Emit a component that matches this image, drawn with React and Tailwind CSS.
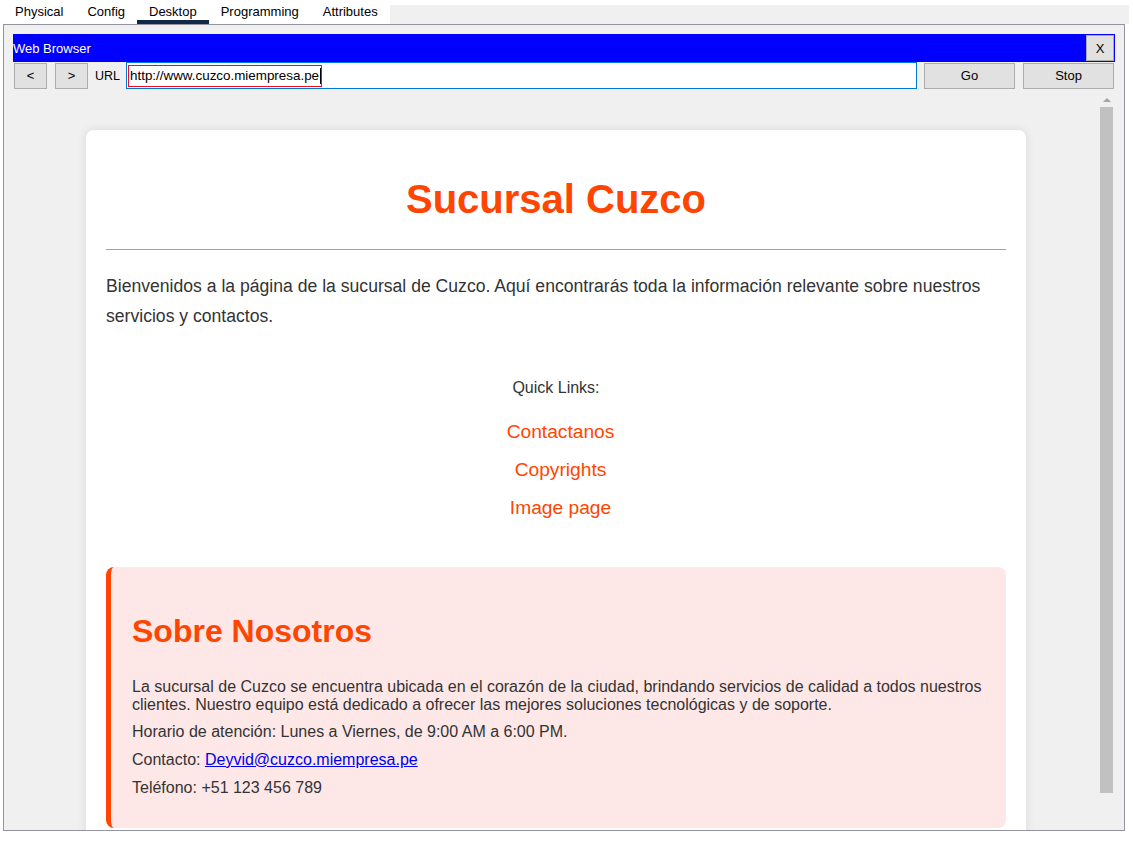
import React from "react";

const TABS = [
  { label: "Physical" },
  { label: "Config" },
  { label: "Desktop", active: true },
  { label: "Programming" },
  { label: "Attributes" },
];

const LINKS = ["Contactanos", "Copyrights", "Image page"];

const WinButton = ({ children, className = "" }) => (
  <div
    className={`flex shrink-0 items-center justify-center pt-px bg-[#e1e1e1] border border-[#adadad] text-[13px] text-black ${className}`}
  >
    {children}
  </div>
);

const App = () => {
  return (
    <div className="w-[1133px] h-[845px] bg-white overflow-hidden font-['Liberation_Sans',Arial,sans-serif] text-black">
      {/* Tab strip */}
      <div className="flex h-6 pl-[3px]">
        {TABS.map((t) => (
          <div
            key={t.label}
            className={`px-3 h-6 flex items-center text-[13px] leading-none border-b-[4px] ${
              t.active ? "border-[#10294a]" : "border-transparent"
            }`}
          >
            <span className="mt-[2px]">{t.label}</span>
          </div>
        ))}
        <div className="flex-1 mt-[5px] mr-[4px] bg-[#f0f0f0]" />
      </div>

      {/* Desktop panel */}
      <div className="ml-[3px] w-[1122px] h-[807px] border border-[#9494a0] bg-[#f0f0f0] pl-[9px] pt-[9px]">
        <div className="w-[1102px]">
          {/* Title bar */}
          <div className="h-[28px] bg-[#0000ff] flex items-start justify-between">
            <span className="text-white text-[13px] leading-[28px] mt-px">Web Browser</span>
            <WinButton className="w-[28px] h-[26px] mt-[1px] mr-[1px]">X</WinButton>
          </div>

          {/* Address row */}
          <div className="h-[27px] flex items-center">
            <WinButton className="ml-[1px] w-[33px] h-[26px]">&lt;</WinButton>
            <WinButton className="ml-[8px] w-[33px] h-[26px]">&gt;</WinButton>
            <span className="ml-[7px] mt-[2px] w-[24px] shrink-0 text-[12.5px] whitespace-nowrap">URL</span>
            <div className="ml-[7px] w-[791px] shrink-0 h-[27px] bg-white border border-[#0078d7] flex items-center pl-px">
              <div className="h-[22px] border border-[#e81123] flex items-center pl-px pt-px">
                <span className="text-[13.4px] leading-none">http://www.cuzco.miempresa.pe</span>
                <span className="ml-[1px] w-px h-[16px] bg-black" />
              </div>
            </div>
            <WinButton className="ml-[7px] w-[91px] h-[26px]">Go</WinButton>
            <WinButton className="ml-[8px] w-[91px] h-[26px]">Stop</WinButton>
          </div>

          {/* Page viewport */}
          <div className="mt-[3px] h-[738px] flex">
            <div className="w-[1087px] h-full overflow-hidden bg-[#f0f0f0]">
              <div className="ml-[73px] mt-[38px] w-[940px] bg-white rounded-lg shadow-[0_0_10px_rgba(0,0,0,0.1)] px-5 pt-5 pb-10 text-[#333]">
                <h1 className="mt-[26px] text-center text-[40px] leading-[46px] font-bold text-[#ff4500]">
                  Sucursal Cuzco
                </h1>
                <div className="mt-[27px] h-px bg-[#a3a3a3]" />
                <p className="mt-[21px] text-[17.6px] leading-[30px]">
                  Bienvenidos a la página de la sucursal de Cuzco. Aquí encontrarás toda la información
                  relevante sobre nuestros servicios y contactos.
                </p>

                {/* Quick links */}
                <p className="mt-[48px] text-center text-[16px] leading-[18px]">Quick Links:</p>
                <div className="mt-[24px] pl-[9px] flex flex-col items-center gap-4">
                  {LINKS.map((l) => (
                    <a key={l} className="text-[19.2px] leading-[22px] text-[#ff4500]">
                      {l}
                    </a>
                  ))}
                </div>

                {/* About */}
                <div className="mt-[48px] bg-[#fde7e7] border-l-[5px] border-[#ff4500] rounded-lg pl-[21px] pr-5 pt-5 pb-[31px] text-[16px] leading-[18px]">
                  <h2 className="mt-[26px] text-[32px] leading-[37px] font-bold text-[#ff4500]">
                    Sobre Nosotros
                  </h2>
                  <p className="mt-[28px]">
                    La sucursal de Cuzco se encuentra ubicada en el corazón de la ciudad, brindando servicios
                    de calidad a todos nuestros clientes. Nuestro equipo está dedicado a ofrecer las mejores
                    soluciones tecnológicas y de soporte.
                  </p>
                  <p className="mt-[9px]">Horario de atención: Lunes a Viernes, de 9:00 AM a 6:00 PM.</p>
                  <p className="mt-[10px]">
                    Contacto: <a className="text-[#0000ee] underline">Deyvid@cuzco.miempresa.pe</a>
                  </p>
                  <p className="mt-[10px]">Teléfono: +51 123 456 789</p>
                </div>
                <div className="h-40" />
              </div>
            </div>

            {/* Scrollbar */}
            <div className="w-[13px] h-full flex flex-col items-center">
              <div className="h-[15px] w-full flex items-center justify-center">
                <div className="w-0 h-0 border-l-[4px] border-r-[4px] border-b-[4px] border-l-transparent border-r-transparent border-b-[#a3a3a3]" />
              </div>
              <div className="w-full h-[686px] bg-[#c1c1c1]" />
            </div>
          </div>
        </div>
      </div>
    </div>
  );
};

export default App;
